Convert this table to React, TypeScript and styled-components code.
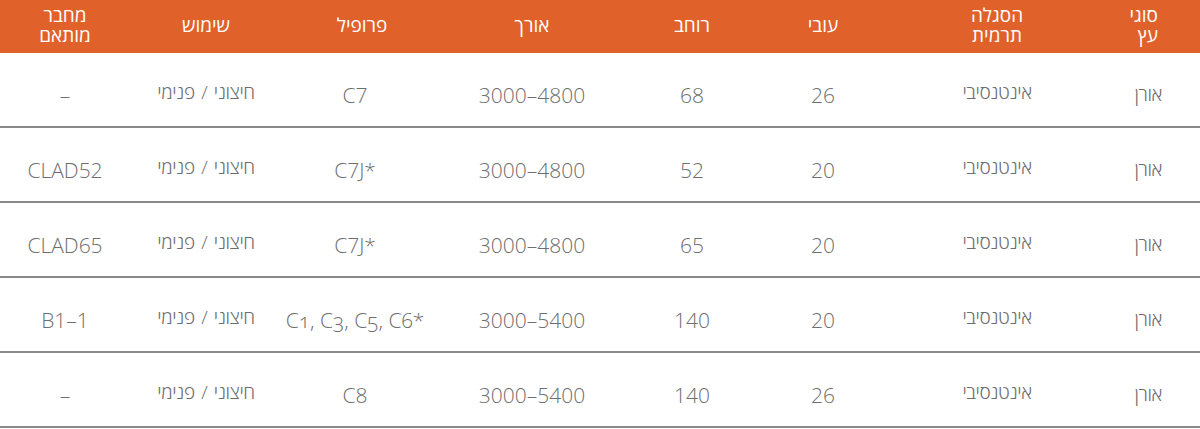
import React from "react";
import styled, { createGlobalStyle } from "styled-components";

const Global = createGlobalStyle`
  html, body { margin: 0; padding: 0; background: #ffffff; }
  body { font-family: "Open Sans", "Noto Sans", sans-serif; }
`;

const widths = [90, 226, 122, 140, 180, 160, 152, 130];
const cols = widths.map((w) => `${w}px`).join(" ");

const Table = styled.div`
  direction: rtl;
  width: 1200px;
  display: flex;
  flex-direction: column;
`;

const HeadRow = styled.div`
  display: grid;
  grid-template-columns: ${cols};
  height: 53px;
  background: #e0612a;
`;

const HeadCell = styled.div<{ $start?: boolean }>`
  display: flex;
  align-items: center;
  justify-content: ${(p) => (p.$start ? "flex-start" : "center")};
  padding: 0 ${(p) => (p.$start ? "42px" : "0")} 3px 0;
  color: #ffffff;
  font-size: 19px;
  line-height: 20px;
  font-weight: 400;
  white-space: nowrap;
  text-align: ${(p) => (p.$start ? "right" : "center")};
`;

const Row = styled.div`
  display: grid;
  grid-template-columns: ${cols};
  height: 73px;
  border-bottom: 2px solid #8a8a8a;
`;

const Cell = styled.div<{ $start?: boolean; $lift?: number; $heb?: boolean; $right?: number; $words?: number }>`
  display: flex;
  align-items: center;
  justify-content: ${(p) => (p.$start ? "flex-start" : "center")};
  padding-top: ${(p) => 10 - (p.$lift ?? 0) * 2}px;
  padding-right: ${(p) => (p.$start ? 38 : p.$right ?? 0)}px;
  color: #6e6e6e;
  font-size: ${(p) => (p.$heb ? "19px" : "21px")};
  letter-spacing: ${(p) => (p.$heb ? "-0.4px" : "0")};
  word-spacing: ${(p) => p.$words ?? 0}px;
  font-weight: 300;
  white-space: nowrap;
`;

const Ltr = styled.span<{ $old?: boolean }>`
  direction: ltr;
  unicode-bidi: isolate;
  font-variant-numeric: ${(p) => (p.$old ? "oldstyle-nums" : "normal")};
`;

type RowData = {
  wood: string;
  thermal: string;
  thick: string;
  width: string;
  length: string;
  profile: string;
  use: string;
  conn: string;
  old?: boolean;
};

const rows: RowData[] = [
  { wood: "אורן", thermal: "אינטנסיבי", thick: "26", width: "68", length: "3000–4800", profile: "C7", use: "חיצוני / פנימי", conn: "–" },
  { wood: "אורן", thermal: "אינטנסיבי", thick: "20", width: "52", length: "3000–4800", profile: "C7J*", use: "חיצוני / פנימי", conn: "CLAD52" },
  { wood: "אורן", thermal: "אינטנסיבי", thick: "20", width: "65", length: "3000–4800", profile: "C7J*", use: "חיצוני / פנימי", conn: "CLAD65" },
  { wood: "אורן", thermal: "אינטנסיבי", thick: "20", width: "140", length: "3000–5400", profile: "C1, C3, C5, C6*", use: "חיצוני / פנימי", conn: "B1–1", old: true },
  { wood: "אורן", thermal: "אינטנסיבי", thick: "26", width: "140", length: "3000–5400", profile: "C8", use: "חיצוני / פנימי", conn: "–" },
];

export default function App() {
  return (
    <>
      <Global />
      <Table>
        <HeadRow>
          <HeadCell $start>
            סוגי
            <br />
            עץ
          </HeadCell>
          <HeadCell>
            הסגלה
            <br />
            תרמית
          </HeadCell>
          <HeadCell>עובי</HeadCell>
          <HeadCell>רוחב</HeadCell>
          <HeadCell>אורך</HeadCell>
          <HeadCell>פרופיל</HeadCell>
          <HeadCell>שימוש</HeadCell>
          <HeadCell>
            מחבר
            <br />
            מותאם
          </HeadCell>
        </HeadRow>
        {rows.map((r, i) => (
          <Row key={i}>
            <Cell $start $heb $lift={1}>{r.wood}</Cell>
            <Cell $heb $lift={3}>{r.thermal}</Cell>
            <Cell><Ltr>{r.thick}</Ltr></Cell>
            <Cell><Ltr>{r.width}</Ltr></Cell>
            <Cell><Ltr>{r.length}</Ltr></Cell>
            <Cell $right={14}><Ltr $old={r.old}>{r.profile}</Ltr></Cell>
            <Cell $heb $lift={3} $words={2}>{r.use}</Cell>
            <Cell><Ltr>{r.conn}</Ltr></Cell>
          </Row>
        ))}
      </Table>
    </>
  );
}
